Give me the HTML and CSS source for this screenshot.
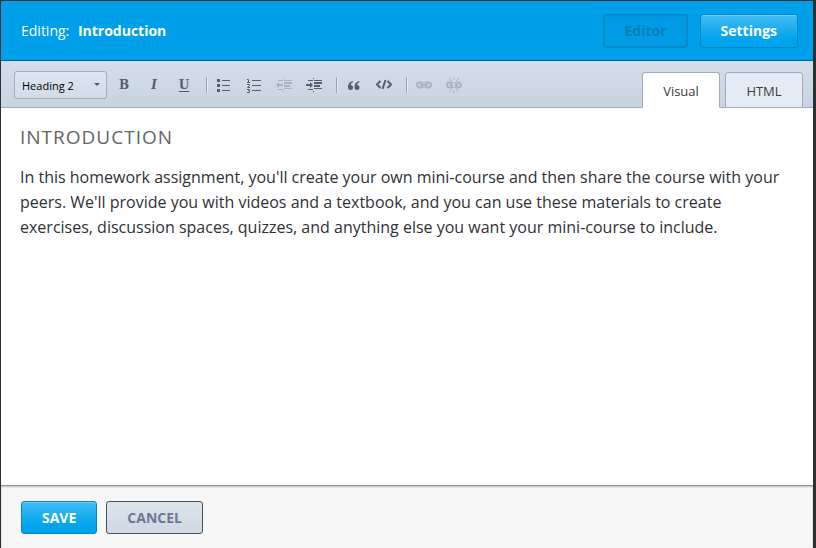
FILE: index.html
```html
<!DOCTYPE html>
<html lang="en">
<head>
<meta charset="utf-8">
<title>Editing: Introduction</title>
<link rel="stylesheet" href="styles.css">
</head>
<body>
<main class="editor">
  <header class="titlebar">
    <h1 class="title">Editing: <strong>Introduction</strong></h1>
    <div class="modes">
      <button class="button mode-active" type="button">Editor</button>
      <button class="button primary" type="button">Settings</button>
    </div>
  </header>

  <div class="toolbar">
    <div class="format">
      <select aria-label="Text format">
        <option>Heading 2</option>
      </select>
      <svg class="caret" width="6" height="4" viewBox="0 0 6 4"><path d="M0 0h6L3 3z"/></svg>
    </div>
    <div class="tools">
      <button class="tool serif" type="button" aria-label="Bold"><b>B</b></button>
      <button class="tool serif" type="button" aria-label="Italic"><i>I</i></button>
      <button class="tool serif" type="button" aria-label="Underline"><u>U</u></button>
      <span class="separator"></span>
      <button class="tool" type="button" aria-label="Bullet list"><svg width="16" height="16" viewBox="0 0 16 16"><path d="M1 2h3v3H1zM1 7h3v3H1zM1 12h3v3H1zM6 3h8v1H6zM6 8h8v1H6zM6 13h8v1H6z"/></svg></button>
      <button class="tool" type="button" aria-label="Numbered list"><svg width="16" height="16" viewBox="0 0 16 16"><path d="M6 3h9v1H6zM6 8h9v1H6zM6 13h9v1H6z"/><path class="line" d="M1 2.500h1.500v3M1 5.500h3M1 7.500h2.500v1L1.500 10.500H4M1 12.500h2.500L2.500 13.500h1v2H1"/></svg></button>
      <button class="tool" type="button" aria-label="Outdent" disabled><svg width="16" height="16" viewBox="0 0 16 16"><path d="M2 3h5v1H2zM8 3h8v1H8zM8 5h8v2H8zM8 8h6v2H8zM8 11h8v1H8zM2 12h5v1H2zM7 1h1v1H7zM7 14h1v1H7zM0 8l3-3v2h4v2H3v2z"/></svg></button>
      <button class="tool" type="button" aria-label="Indent"><svg width="16" height="16" viewBox="0 0 16 16"><path d="M2 3h5v1H2zM8 3h8v1H8zM8 5h8v2H8zM8 8h6v2H8zM8 11h8v1H8zM2 12h5v1H2zM7 1h1v1H7zM7 14h1v1H7zM7 8L4 5v2H0v2h4v2z"/></svg></button>
      <span class="separator"></span>
      <button class="tool" type="button" aria-label="Quote"><svg width="16" height="16" viewBox="0 0 16 16"><path d="M7 4Q2 5 2 10q0 3 2.500 3T7 10.500 4.500 8Q5 6 7 5zM13.500 4q-5 1-5 6 0 3 2.500 3t2.500-2.500T11 8q.5-2 2.500-3z"/></svg></button>
      <button class="tool" type="button" aria-label="Code"><svg width="16" height="16" viewBox="0 0 16 16"><path class="line bold" d="M4.500 4L1 7.500 4.500 11M11.500 4L15 7.500 11.500 11M9.500 3l-3 9"/></svg></button>
      <span class="separator"></span>
      <button class="tool" type="button" aria-label="Link" disabled><svg width="16" height="16" viewBox="0 0 16 16"><path class="line link" d="M7 6.500Q6.500 5.500 5 5.500H3.500a2.500 2.500 0 0 0 0 5H5q1.500 0 2-1M9 6.500q.5-1 2-1h1.500a2.500 2.500 0 0 1 0 5H11q-1.500 0-2-1M4 8h8"/></svg></button>
      <button class="tool" type="button" aria-label="Unlink" disabled><svg width="16" height="16" viewBox="0 0 16 16"><path class="line link" d="M7 6.500Q6.500 5.500 5 5.500H3.500a2.500 2.500 0 0 0 0 5H5q1.500 0 2-1M9 6.500q.5-1 2-1h1.500a2.500 2.500 0 0 1 0 5H11q-1.500 0-2-1M4 8h3M9 8h3"/><path class="line" d="M3 1l3 3M8 0v3M13 1l-3 3M3 15l3-3M8 16v-3M13 15l-3-3"/></svg></button>
    </div>
    <div class="tabs" role="tablist">
      <button class="tab selected" type="button" role="tab" aria-selected="true">Visual</button>
      <button class="tab" type="button" role="tab" aria-selected="false">HTML</button>
    </div>
  </div>

  <article class="content">
    <h2>Introduction</h2>
    <p>In this homework assignment, you'll create your own mini-course and then share the course with your peers. We'll provide you with videos and a textbook, and you can use these materials to create exercises, discussion spaces, quizzes, and anything else you want your mini-course to include.</p>
  </article>

  <footer class="actions">
    <button class="button save" type="button">SAVE</button>
    <button class="button cancel" type="button">CANCEL</button>
  </footer>
</main>
</body>
</html>
```
FILE: styles.css
```css
* {
  box-sizing: border-box;
}

body {
  margin: 0;
  font-family: "Open Sans", sans-serif;
  color: #2f3136;
}

button,
select {
  font-family: inherit;
  margin: 0;
}

.editor {
  display: flex;
  flex-direction: column;
  min-height: 100vh;
  border: solid #2e2f31;
  border-width: 1px 3px 0 1px;
  background: #fff;
}

.titlebar {
  display: flex;
  align-items: center;
  justify-content: space-between;
  height: 60px;
  padding: 0 15px 0 20px;
  background: #009fe9;
  border-bottom: 1px solid #00649a;
}

.title {
  margin: 0;
  font-size: 14px;
  font-weight: 400;
  color: #fff;
}

.title strong {
  margin-left: 5px;
  font-weight: 700;
}

.modes {
  display: flex;
  gap: 12px;
}

.button {
  height: 34px;
  padding: 0 20px;
  border: 1px solid #0784c4;
  border-radius: 3px;
  font-size: 14px;
  font-weight: 700;
}

.primary,
.save {
  color: #fff;
  background: linear-gradient(#42bbf2, #00a4ee 75%);
  box-shadow: inset 0 1px 0 #6fcdf6;
}

.mode-active {
  color: #0780ba;
  background: #009be4;
  box-shadow: inset 0 0 3px #0784c4;
}

.toolbar {
  display: flex;
  align-items: center;
  height: 47px;
  padding: 2px 10px 0 13px;
  background: linear-gradient(#d4dee9, #c8d3e1);
  border-bottom: 1px solid #a4aab3;
}

.format {
  display: grid;
  align-items: center;
  width: 93px;
  margin-right: 2px;
}

.format select,
.caret {
  grid-area: 1 / 1;
}

.format select {
  appearance: none;
  width: 100%;
  height: 28px;
  padding: 0 7px;
  border: 1px solid #a3abb7;
  border-radius: 3px;
  background: linear-gradient(#dde6f1, #d1dce8);
  font-size: 11px;
  color: #000;
}

.caret {
  justify-self: end;
  margin-right: 7px;
  fill: #555c66;
  pointer-events: none;
}

.tools {
  display: flex;
  align-items: center;
}

.tool {
  display: flex;
  align-items: center;
  justify-content: center;
  width: 30px;
  height: 28px;
  padding: 0;
  border: 0;
  background: none;
  color: #555f68;
}

.tool:disabled {
  color: #a9b3bf;
}

.serif {
  font-family: "DejaVu Serif", serif;
  font-size: 12px;
  font-weight: 700;
}

.serif u {
  text-underline-offset: 2px;
}

.tool svg {
  fill: currentColor;
}

.tool .line {
  fill: none;
  stroke: currentColor;
}

.tool .bold {
  stroke-width: 2;
}

.tool .link {
  stroke-width: 2;
}

.separator {
  width: 2px;
  height: 16px;
  margin: 0 1px 0 7px;
  border-left: 1px solid #98a1ad;
  background: #e4ebf3;
}

.tabs {
  display: flex;
  align-self: flex-end;
  gap: 5px;
  margin: 0 0 -1px auto;
}

.tab {
  width: 78px;
  height: 36px;
  padding: 2px 0 0;
  border: 1px solid #a4aab3;
  border-radius: 3px 3px 0 0;
  background: #e4ebf4;
  font-size: 13px;
  color: #3c3c3c;
}

.selected {
  border-bottom-color: #fff;
  background: #fff;
}

.content {
  flex: 1;
  padding: 15px 19px;
}

.content h2 {
  margin: 0 0 14px;
  font-size: 19px;
  font-weight: 400;
  line-height: 28px;
  letter-spacing: 1px;
  text-transform: uppercase;
  color: #646464;
}

.content p {
  margin: 0;
  font-size: 16px;
  line-height: 25px;
}

.actions {
  display: flex;
  gap: 9px;
  padding: 15px 20px 14px;
  border-top: 1px solid #929292;
  background: #f7f7f7;
  box-shadow: inset 0 1px 2px #bbb;
}

.actions .button {
  height: 33px;
}

.cancel {
  border-color: #4b4f57;
  background: linear-gradient(#dde4ec, #cfd8e3);
  color: #6d7890;
}
```
